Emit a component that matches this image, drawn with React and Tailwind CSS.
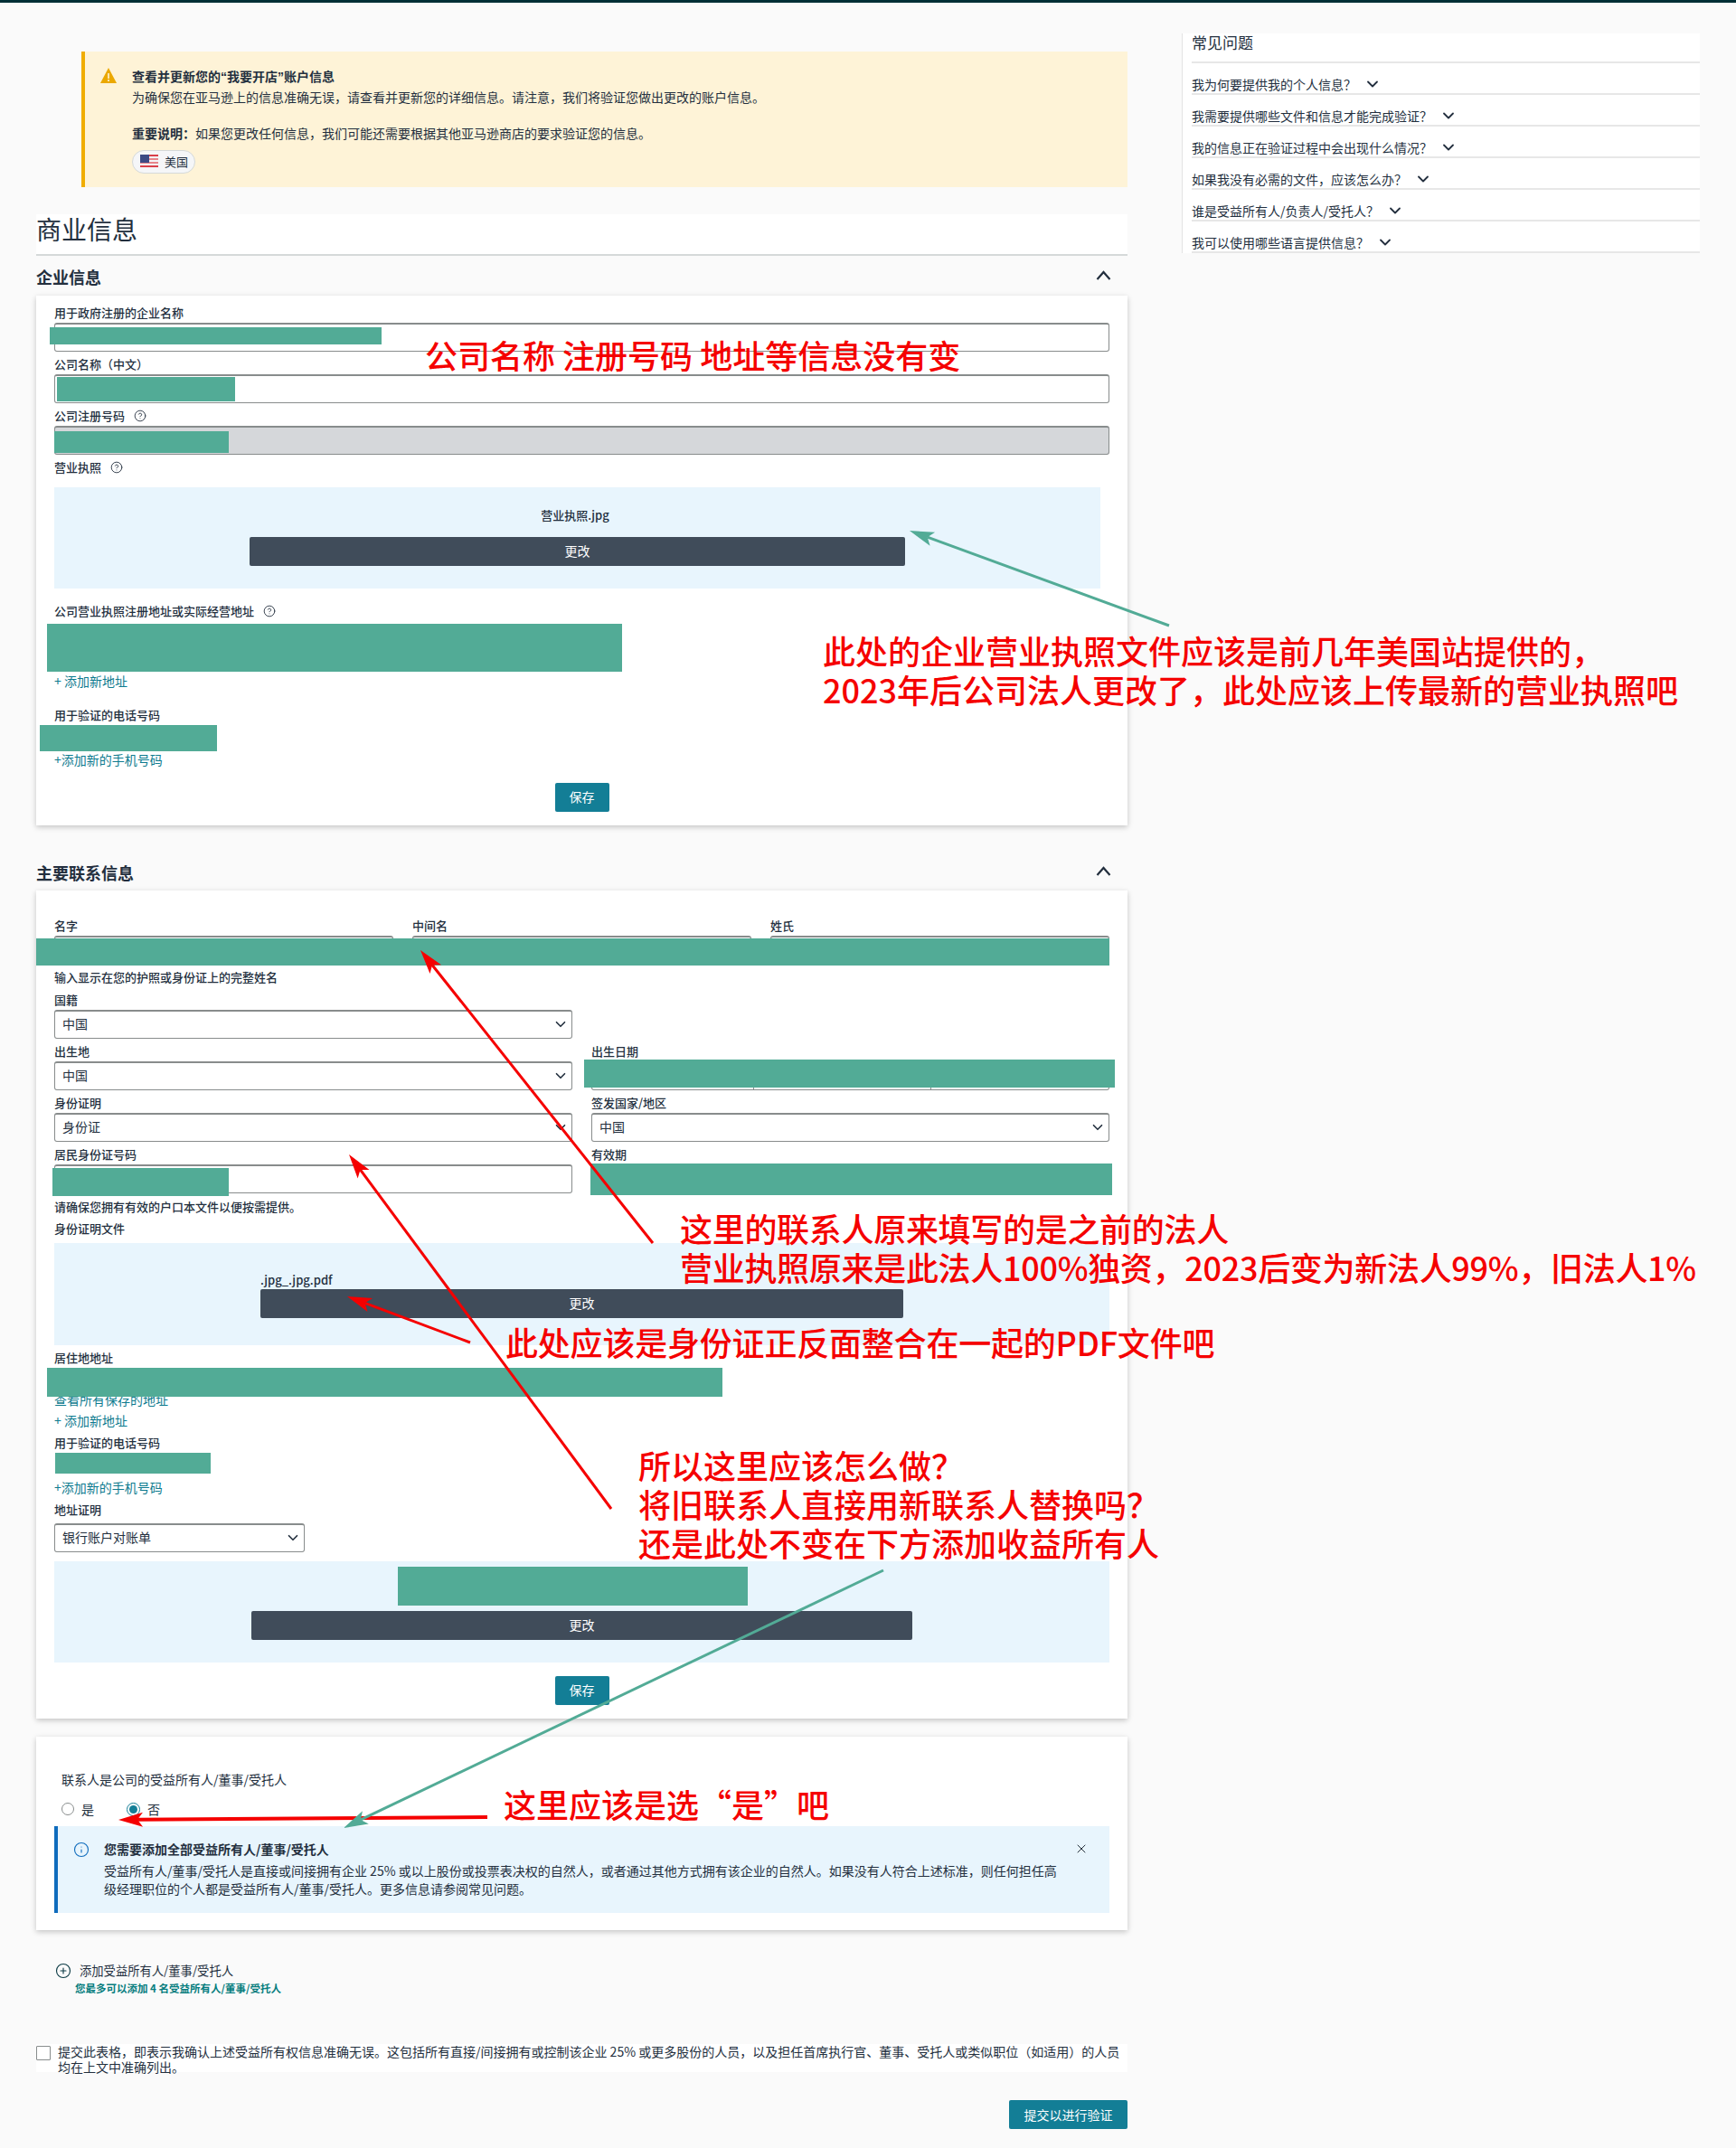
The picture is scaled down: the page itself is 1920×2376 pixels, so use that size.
import { ChevronDown, CircleHelp, CirclePlus, Info, X } from "lucide-react";

const GREEN = "#52ab96";
const RED = "#f50000";

function Label({ children, help, className = "" }) {
  return (
    <div className={`flex h-[19px] items-center gap-[10px] pb-[3px] text-[13px] leading-[16px] font-medium text-[#232f3e] ${className}`}>
      <span>{children}</span>
      {help && <CircleHelp size={14} strokeWidth={1.5} />}
    </div>
  );
}

function TextBox({ disabled, className = "" }) {
  return (
    <div className={`h-[32px] rounded-[3px] border border-t-2 border-[#888c8c] ${disabled ? "bg-[#d5d7da]" : "bg-white"} ${className}`} />
  );
}

function SelectBox({ value, className = "" }) {
  return (
    <div className={`flex h-[32px] items-center justify-between rounded-[3px] border border-t-2 border-[#888c8c] bg-white pl-[8px] pr-[3px] text-[14px] text-[#232f3e] ${className}`}>
      <span className="-mt-[2px]">{value}</span>
      <ChevronDown size={18} strokeWidth={2.2} className="-mt-[2px]" />
    </div>
  );
}

function LinkText({ children, className = "" }) {
  return <div className={`h-[19px] text-[14px] leading-[17px] text-[#0f7b8f] ${className}`}>{children}</div>;
}

function Redact({ className = "" }) {
  return <div className={`bg-[#52ab96] ${className}`} />;
}

function SaveButton({ className = "" }) {
  return (
    <button className={`flex h-[32px] w-[60px] items-center justify-center rounded-[2px] bg-[#137e96] pb-[2px] text-[14px] text-white ${className}`}>
      保存
    </button>
  );
}

function ChangeButton({ className = "" }) {
  return (
    <button className={`flex h-[32px] items-center justify-center rounded-[2px] bg-[#404c5a] pb-[2px] text-[14px] text-white ${className}`}>
      更改
    </button>
  );
}

function SectionTitle({ children, className = "" }) {
  return (
    <div className={`flex h-[32px] items-center justify-between pr-[18px] ${className}`}>
      <h3 className="text-[18px] font-bold text-[#232f3e]">{children}</h3>
      <svg width="17" height="11" viewBox="0 0 17 11" className="-mt-[3px] text-[#232f3e]">
        <polyline points="1.5,10 8.5,2 15.5,10" fill="none" stroke="currentColor" strokeWidth="2.2" />
      </svg>
    </div>
  );
}

function Arrow({ x1, y1, x2, y2, color, width, len = 27, half = 8 }) {
  const d = Math.hypot(x2 - x1, y2 - y1);
  const ux = (x2 - x1) / d;
  const uy = (y2 - y1) / d;
  const bx = x2 - ux * len;
  const by = y2 - uy * len;
  const nx = x2 - ux * (len - 6);
  const ny = y2 - uy * (len - 6);
  const points = [
    `${x2},${y2}`,
    `${bx - uy * half},${by + ux * half}`,
    `${nx},${ny}`,
    `${bx + uy * half},${by - ux * half}`,
  ].join(" ");
  return (
    <g>
      <line x1={x1} y1={y1} x2={nx} y2={ny} stroke={color} strokeWidth={width} />
      <polygon points={points} fill={color} />
    </g>
  );
}

function Note({ children, className = "" }) {
  return (
    <div className={`absolute z-30 whitespace-pre text-[36px] leading-[43px] font-medium text-[#f50000] [font-family:"Noto_Sans_CJK_SC",sans-serif] ${className}`}>
      {children}
    </div>
  );
}

function Flag() {
  return (
    <svg width="20" height="16" viewBox="0 0 20 16">
      <rect width="20" height="16" fill="#f4f4f6" />
      <rect y="0" width="20" height="2" fill="#d9404a" />
      <rect y="4" width="20" height="2" fill="#e7858b" />
      <rect y="8" width="20" height="2" fill="#e7858b" />
      <rect y="12" width="20" height="2" fill="#d9404a" />
      <rect width="10" height="9" fill="#3c4a84" />
    </svg>
  );
}

const faqs = [
  "我为何要提供我的个人信息？",
  "我需要提供哪些文件和信息才能完成验证？",
  "我的信息正在验证过程中会出现什么情况？",
  "如果我没有必需的文件，应该怎么办？",
  "谁是受益所有人/负责人/受托人？",
  "我可以使用哪些语言提供信息？",
];

export default function App() {
  return (
    <div className='relative h-[2376px] overflow-hidden bg-[#fafafa] text-[#232f3e] [font-family:"Noto_Sans_CJK_SC","Liberation_Sans",sans-serif]'>
      <div className="h-[3px] bg-[#002f36]" />
      <div className="flex items-start">
        <main className="ml-[40px] w-[1207px]">
          <div className="mt-[54px] ml-[50px] flex h-[150px] border-l-4 border-[#f0ad00] bg-[#fef3d7] pt-[18px] pl-[17px]">
            <svg width="18" height="17" viewBox="0 0 18 17" className="mr-[17px] shrink-0">
              <polygon points="9,0 18,17 0,17" fill="#eba800" />
              <rect x="8.2" y="6" width="1.6" height="6" fill="#fef3d7" />
              <rect x="8.2" y="13" width="1.6" height="2" fill="#fef3d7" />
            </svg>
            <div className="-mt-[1px] text-[14px] leading-[20px]">
              <div className="font-bold">
                查看并更新您的<span className='[font-family:"Liberation_Sans",sans-serif]'>“</span>我要开店<span className='[font-family:"Liberation_Sans",sans-serif]'>”</span>账户信息
              </div>
              <div className="mt-[2px]">为确保您在亚马逊上的信息准确无误，请查看并更新您的详细信息。请注意，我们将验证您做出更改的账户信息。</div>
              <div className="mt-[20px]"><span className="font-bold">重要说明：</span>如果您更改任何信息，我们可能还需要根据其他亚马逊商店的要求验证您的信息。</div>
              <div className="mt-[9px] flex h-[26px] w-[70px] items-center gap-[7px] rounded-full border border-[#d5d9d9] bg-[#f5f6f8] pl-[8px] text-[13px]">
                <Flag />
                <span>美国</span>
              </div>
            </div>
          </div>

          <div className="mt-[30px] h-[46px] border-b-2 border-[#d5d9d9] bg-white">
            <h1 className="text-[28px] leading-[32px] font-normal">商业信息</h1>
          </div>

          <SectionTitle className="mt-[7px] mb-[5px]">企业信息</SectionTitle>

          <section className="h-[586px] bg-white px-[20px] pt-[11px] shadow-[0_2px_6px_rgba(0,0,0,0.22)]">
            <Label>用于政府注册的企业名称</Label>
            <div className="relative">
              <TextBox />
              <Redact className="absolute top-[5px] -left-[5px] h-[19px] w-[367px]" />
            </div>
            <Label className="mt-[6px]">公司名称（中文）</Label>
            <div className="relative">
              <TextBox />
              <Redact className="absolute top-[3px] left-[3px] h-[27px] w-[197px]" />
            </div>
            <Label help className="mt-[6px]">公司注册号码</Label>
            <div className="relative">
              <TextBox disabled />
              <Redact className="absolute top-[6px] left-0 h-[24px] w-[193px]" />
            </div>
            <Label help className="mt-[6px]">营业执照</Label>
            <div className="mt-[11px] flex h-[112px] w-[1157px] flex-col items-center bg-[#e8f5fd] pt-[22px]">
              <div className="h-[19px] pr-[5px] text-[13px] leading-[17px] font-medium">营业执照.jpg</div>
              <ChangeButton className="mt-[14px] w-[725px]" />
            </div>
            <Label help className="mt-[17px]">公司营业执照注册地址或实际经营地址</Label>
            <Redact className="mt-[3px] -ml-[8px] h-[53px] w-[636px]" />
            <LinkText className="mt-[2px]">+ 添加新地址</LinkText>
            <Label className="mt-[19px]">用于验证的电话号码</Label>
            <Redact className="-ml-[16px] h-[29px] w-[196px]" />
            <LinkText className="mt-px">+添加新的手机号码</LinkText>
            <SaveButton className="mx-auto mt-[15px]" />
          </section>

          <SectionTitle className="mt-[36px] mb-[4px]">主要联系信息</SectionTitle>

          <section className="h-[916px] bg-white px-[20px] pt-[31px] shadow-[0_2px_6px_rgba(0,0,0,0.22)]">
            <div className="relative grid grid-cols-3 gap-x-[21px]">
              {["名字", "中间名", "姓氏"].map((name) => (
                <div key={name}>
                  <Label>{name}</Label>
                  <TextBox />
                </div>
              ))}
              <Redact className="absolute top-[22px] -left-[20px] h-[30px] w-[1187px]" />
            </div>
            <Label className="mt-[6px]">输入显示在您的护照或身份证上的完整姓名</Label>
            <div className="mt-[6px] grid grid-cols-2 gap-x-[21px] gap-y-[6px]">
              <div>
                <Label>国籍</Label>
                <SelectBox value="中国" />
              </div>
              <div />
              <div>
                <Label>出生地</Label>
                <SelectBox value="中国" />
              </div>
              <div className="relative">
                <Label>出生日期</Label>
                <div className="flex h-[32px]">
                  <TextBox className="w-[180px] rounded-r-none" />
                  <TextBox className="w-[197px] rounded-none border-l-0" />
                  <TextBox className="w-[197px] rounded-l-none border-l-0" />
                </div>
                <Redact className="absolute top-[17px] -left-[8px] h-[31px] w-[587px]" />
              </div>
              <div>
                <Label>身份证明</Label>
                <SelectBox value="身份证" />
              </div>
              <div>
                <Label>签发国家/地区</Label>
                <SelectBox value="中国" />
              </div>
              <div className="relative">
                <Label>居民身份证号码</Label>
                <TextBox />
                <Redact className="absolute top-[23px] -left-[2px] h-[31px] w-[195px]" />
              </div>
              <div className="relative">
                <Label>有效期</Label>
                <Redact className="absolute top-[18px] -left-px h-[35px] w-[577px]" />
              </div>
            </div>
            <Label className="mt-[7px]">请确保您拥有有效的户口本文件以便按需提供。</Label>
            <Label className="mt-[5px]">身份证明文件</Label>
            <div className="mt-[5px] h-[113px] bg-[#e8f5fd] pt-[33px] pl-[228px]">
              <div className="h-[18px] text-[13px] leading-[16px] font-medium">.jpg_.jpg.pdf</div>
              <ChangeButton className="w-[711px]" />
            </div>
            <Label className="mt-[6px]">居住地地址</Label>
            <Redact className="relative z-10 -ml-[8px] h-[32px] w-[747px]" />
            <LinkText className="-mt-[5px]">查看所有保存的地址</LinkText>
            <LinkText className="mt-[4px]">+ 添加新地址</LinkText>
            <Label className="mt-[6px]">用于验证的电话号码</Label>
            <Redact className="ml-px h-[23px] w-[172px]" />
            <LinkText className="mt-[7px]">+添加新的手机号码</LinkText>
            <Label className="mt-[6px]">地址证明</Label>
            <SelectBox value="银行账户对账单" className="mt-[4px] w-[277px]" />
            <div className="mt-[10px] h-[112px] bg-[#e8f5fd] pt-[6px]">
              <Redact className="ml-[380px] h-[43px] w-[387px]" />
              <ChangeButton className="mt-[6px] ml-[218px] w-[731px]" />
            </div>
            <SaveButton className="mx-auto mt-[15px]" />
          </section>

          <section className="mt-[20px] h-[214px] bg-white px-[20px] pt-[39px] shadow-[0_2px_6px_rgba(0,0,0,0.22)]">
            <div className="h-[19px] pl-[8px] text-[14px] leading-[17px]">联系人是公司的受益所有人/董事/受托人</div>
            <div className="mt-[12px] flex h-[20px] items-center pl-[8px] text-[14px]">
              <span className="size-[14px] rounded-full border border-[#888c8c] bg-white" />
              <span className="ml-[8px]">是</span>
              <span className="ml-[36px] flex size-[15px] items-center justify-center rounded-full border border-[#137e96]">
                <span className="size-[9px] rounded-full bg-[#137e96]" />
              </span>
              <span className="ml-[8px]">否</span>
            </div>
            <div className="mt-[9px] flex h-[96px] border-l-4 border-[#0f6cbd] bg-[#e8f5fd] pt-[17px] pl-[17px]">
              <Info size={18} strokeWidth={1.5} className="shrink-0 text-[#0f6cbd]" />
              <div className="ml-[16px] w-[1065px] text-[14px] leading-[20px]">
                <div className="-mt-[2px] font-bold">您需要添加全部受益所有人/董事/受托人</div>
                <div className="mt-[4px]">受益所有人/董事/受托人是直接或间接拥有企业 25% 或以上股份或投票表决权的自然人，或者通过其他方式拥有该企业的自然人。如果没有人符合上述标准，则任何担任高级经理职位的个人都是受益所有人/董事/受托人。更多信息请参阅常见问题。</div>
              </div>
              <X size={16} strokeWidth={1.5} className="ml-[8px] shrink-0" />
            </div>
          </section>

          <div className="mt-[36px] flex pl-[21px]">
            <CirclePlus size={18} strokeWidth={1.5} className="shrink-0 text-[#0b3a44]" />
            <div className="-ml-[5px]">
              <div className="ml-[14px] h-[19px] text-[13.3px] leading-[18px]">添加受益所有人/董事/受托人</div>
              <div className="mt-px ml-[9px] text-[11.5px] leading-[16px] font-bold text-[#067d7e]">您最多可以添加 4 名受益所有人/董事/受托人</div>
            </div>
          </div>

          <div className="mt-[54px] flex h-[31px] bg-white">
            <span className="mt-[2px] size-[16px] shrink-0 rounded-[1px] border border-[#888c8c] bg-white" />
            <p className="ml-[8px] text-[14px] leading-[17px]">提交此表格，即表示我确认上述受益所有权信息准确无误。这包括所有直接/间接拥有或控制该企业 25% 或更多股份的人员，以及担任首席执行官、董事、受托人或类似职位（如适用）的人员均在上文中准确列出。</p>
          </div>

          <div className="mt-[31px] flex justify-end">
            <button className="h-[32px] w-[131px] rounded-[2px] bg-[#137e96] text-[14px] text-white">提交以进行验证</button>
          </div>
        </main>

        <aside className="mt-[34px] ml-[60px] w-[573px] border-l border-[#e3e3e3] bg-white pl-[10px]">
          <h2 className="h-[33px] border-b-2 border-[#e7e7e7] text-[17px] leading-[20px] font-normal">常见问题</h2>
          {faqs.map((faq) => (
            <div key={faq} className="flex h-[35px] items-start gap-[8px] border-b-2 border-[#e7e7e7] pt-[14px] text-[14px] leading-[19px]">
              <span>{faq}</span>
              <ChevronDown size={20} strokeWidth={2.2} className="-mt-[1px]" />
            </div>
          ))}
        </aside>
      </div>

      <svg className="pointer-events-none absolute top-0 left-0 z-20" width="1920" height="2376">
        <Arrow x1={1293} y1={692} x2={1006} y2={587} color={GREEN} width={3} />
        <Arrow x1={722} y1={1375} x2={465} y2={1051} color={RED} width={3} />
        <Arrow x1={676} y1={1669} x2={386} y2={1277} color={RED} width={3} />
        <Arrow x1={520} y1={1485} x2={384} y2={1434} color={RED} width={3} />
        <Arrow x1={539} y1={2010} x2={131} y2={2013} color={RED} width={4} />
        <Arrow x1={977} y1={1737} x2={380} y2={2022} color={GREEN} width={3} />
      </svg>

      <Note className="top-[371px] left-[470px]">公司名称 注册号码 地址等信息没有变</Note>
      <Note className="top-[698px] left-[910px]">{"此处的企业营业执照文件应该是前几年美国站提供的，\n2023年后公司法人更改了，此处应该上传最新的营业执照吧"}</Note>
      <Note className="top-[1337px] left-[752px] tracking-[-0.3px]">{"这里的联系人原来填写的是之前的法人\n营业执照原来是此法人100%独资，2023后变为新法人99%，旧法人1%"}</Note>
      <Note className="top-[1463px] left-[559px] tracking-[-0.2px]">此处应该是身份证正反面整合在一起的PDF文件吧</Note>
      <Note className="top-[1599px] left-[706px]">{"所以这里应该怎么做？\n将旧联系人直接用新联系人替换吗？\n还是此处不变在下方添加收益所有人"}</Note>
      <Note className="top-[1974px] left-[557px]">这里应该是选“是”吧</Note>
    </div>
  );
}
